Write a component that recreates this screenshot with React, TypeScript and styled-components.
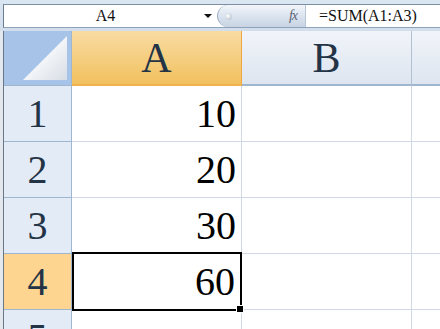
import React from "react";
import styled, { createGlobalStyle } from "styled-components";

const GlobalStyle = createGlobalStyle`
  html, body {
    margin: 0;
    padding: 0;
    overflow: hidden;
  }
  body {
    font-family: "Liberation Serif", "DejaVu Serif", serif;
  }
`;

const Page = styled.div`
  width: 440px;
  height: 329px;
  overflow: hidden;
  background: #e3e8ee;
  display: flex;
  flex-direction: column;
`;

const FormulaBar = styled.div`
  height: 31px;
  box-sizing: border-box;
  padding: 4px 0 3px 3px;
  background: linear-gradient(#dbe6f3, #d3deec);
  display: flex;
  flex-shrink: 0;
`;

const BarInner = styled.div`
  flex: 1;
  display: flex;
  align-items: stretch;
  border-top: 1px solid #7d8fa6;
  border-bottom: 1px solid #8fa2bb;
  border-left: 1px solid #6b7c92;
  background: #fff;
`;

const NameBox = styled.div`
  width: 213px;
  position: relative;
  display: flex;
  align-items: center;
  justify-content: center;
  font-size: 16px;
  color: #111;
  padding-right: 10px;
  box-sizing: border-box;
`;

const DropArrow = styled.span`
  position: absolute;
  right: 5px;
  top: 9px;
  width: 0;
  height: 0;
  border-left: 4px solid transparent;
  border-right: 4px solid transparent;
  border-top: 4px solid #111;
`;

const Splitter = styled.div`
  width: 88px;
  display: flex;
  align-items: center;
  justify-content: space-between;
  padding: 0 8px 0 7px;
  box-sizing: border-box;
  border-radius: 11px 0 0 11px;
  border-left: 1px solid #9fb0c6;
  background: linear-gradient(#f3f6fa, #d9e2ee 55%, #c8d4e3);
`;

const Knob = styled.span`
  width: 7px;
  height: 7px;
  border-radius: 50%;
  background: radial-gradient(circle at 40% 40%, #fff, #a9b6c6);
`;

const Fx = styled.span`
  font-family: "Liberation Serif", serif;
  font-style: italic;
  font-size: 14px;
  color: #5a6576;
  letter-spacing: -1px;
`;

const FormulaText = styled.div`
  flex: 1;
  display: flex;
  align-items: center;
  padding-left: 13px;
  font-size: 16px;
  color: #111;
  border-left: 1px solid #b7c4d5;
`;

const Sheet = styled.div`
  margin-left: 3px;
  border-left: 1px solid #6c7684;
  display: grid;
  grid-template-columns: 68px 170px 170px 60px;
  grid-template-rows: 55px repeat(5, 56px);
  background: #fff;
  flex: 1;
`;

const Corner = styled.div`
  position: relative;
  background: #a8c3e8;
  border-right: 1px solid #9eb6ce;
  border-bottom: 1px solid #9eb6ce;
  overflow: hidden;
`;

const CornerTriangle = styled.div`
  position: absolute;
  right: 4px;
  bottom: 5px;
  width: 44px;
  height: 44px;
  clip-path: polygon(100% 0, 100% 100%, 0 100%);
  background: linear-gradient(135deg, #ffffff 30%, #d7dde6);
`;

const ColHeader = styled.div<{ $active?: boolean }>`
  display: flex;
  align-items: center;
  justify-content: center;
  font-size: 42px;
  color: #243447;
  box-sizing: border-box;
  border-right: 1px solid ${(p) => (p.$active ? "#f0a742" : "#b2c0d3")};
  border-bottom: 2px solid ${(p) => (p.$active ? "#f0b24e" : "#9eb6ce")};
  background: ${(p) =>
    p.$active
      ? "linear-gradient(#f9dba3, #f1c15e)"
      : "linear-gradient(#f1f4f9, #dde5f0)"};
`;

const RowHeader = styled.div<{ $active?: boolean }>`
  display: flex;
  align-items: center;
  justify-content: center;
  font-size: 40px;
  color: #243447;
  box-sizing: border-box;
  border-right: 1px solid #9eb6ce;
  border-bottom: 1px solid #9eb6ce;
  background: ${(p) => (p.$active ? "#fdd590" : "#e3ebf6")};
`;

const Cell = styled.div<{ $selected?: boolean }>`
  position: relative;
  display: flex;
  align-items: center;
  justify-content: flex-end;
  padding-right: 5px;
  font-size: 40px;
  color: #000;
  box-sizing: border-box;
  border-right: 1px solid #d0d7e5;
  border-bottom: 1px solid #d0d7e5;
  ${(p) =>
    p.$selected &&
    `
    border: 2px solid #000;
    margin: -2px 0 -1px 0;
    z-index: 1;
  `}
`;

const Handle = styled.span`
  position: absolute;
  right: -4px;
  bottom: -4px;
  width: 6px;
  height: 6px;
  background: #000;
  border: 1px solid #fff;
`;

const rows = [
  { n: 1, a: "10" },
  { n: 2, a: "20" },
  { n: 3, a: "30" },
  { n: 4, a: "60" },
  { n: 5, a: "" },
];

export default function App() {
  return (
    <Page>
      <GlobalStyle />
      <FormulaBar>
        <BarInner>
          <NameBox>
            A4
            <DropArrow />
          </NameBox>
          <Splitter>
            <Knob />
            <Fx>fx</Fx>
          </Splitter>
          <FormulaText>=SUM(A1:A3)</FormulaText>
        </BarInner>
      </FormulaBar>
      <Sheet>
        <Corner>
          <CornerTriangle />
        </Corner>
        <ColHeader $active>A</ColHeader>
        <ColHeader>B</ColHeader>
        <ColHeader />
        {rows.map((r) => (
          <React.Fragment key={r.n}>
            <RowHeader $active={r.n === 4}>{r.n}</RowHeader>
            <Cell $selected={r.n === 4}>
              {r.a}
              {r.n === 4 && <Handle />}
            </Cell>
            <Cell />
            <Cell />
          </React.Fragment>
        ))}
      </Sheet>
    </Page>
  );
}
